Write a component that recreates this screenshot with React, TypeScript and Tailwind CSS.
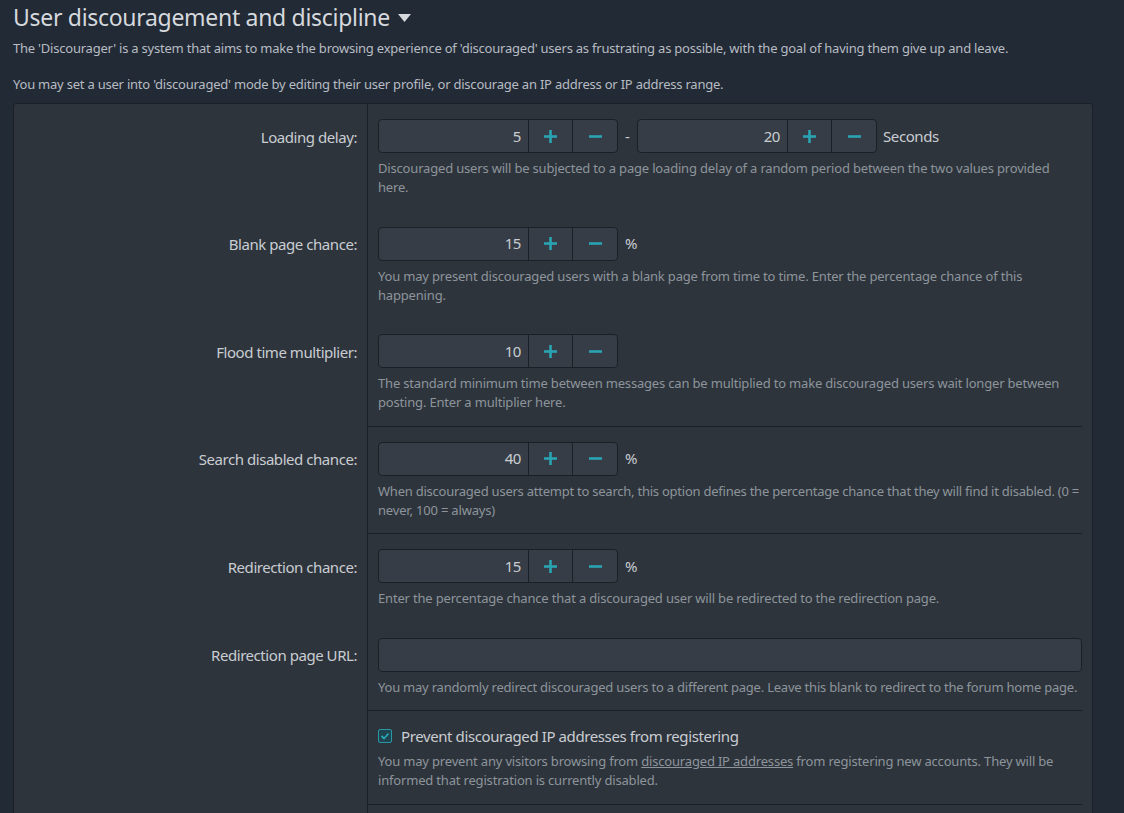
import React from 'react';

const font = { fontFamily: '"Noto Sans", "Open Sans", sans-serif' };

const PlusIcon = () => (
  <svg width="13" height="13" viewBox="0 0 13 13" className="text-[#2aa3b3]">
    <rect x="5.2" y="0" width="2.6" height="13" fill="currentColor" />
    <rect x="0" y="5.2" width="13" height="2.6" fill="currentColor" />
  </svg>
);

const MinusIcon = () => (
  <svg width="13" height="13" viewBox="0 0 13 13" className="text-[#2aa3b3]">
    <rect x="0" y="5.2" width="13" height="2.6" fill="currentColor" />
  </svg>
);

const NumberBox: React.FC<{ value: string }> = ({ value }) => (
  <div className="flex h-[34px] w-[240px] rounded-[4px] border border-[#1b2027] bg-[#363d46]">
    <div className="flex flex-1 items-center justify-end pr-[7px] text-[15px] tracking-[-0.4px] text-[#c9cdd2]">
      {value}
    </div>
    <button className="flex w-[44px] items-center justify-center border-l border-[#1b2027]">
      <PlusIcon />
    </button>
    <button className="flex w-[45px] items-center justify-center border-l border-[#1b2027]">
      <MinusIcon />
    </button>
  </div>
);

const Explain: React.FC<{ children: React.ReactNode }> = ({ children }) => (
  <div className="mt-[6px] text-[13px] leading-[19px] tracking-[-0.18px] text-[#8d949b]">{children}</div>
);

// first row has no top edge; separated rows draw a line across the value column
const Row: React.FC<{ label?: string; separated?: boolean; first?: boolean; children: React.ReactNode }> = ({
  label,
  separated,
  first,
  children,
}) => (
  <div className="grid grid-cols-[354px_1fr]">
    <div className="border-r border-[#1b2027] pr-[10px]">
      {label && (
        <div
          className={`flex h-[34px] items-center justify-end pt-[2px] text-[15px] tracking-[-0.45px] text-[#c9cdd2] ${
            first ? 'mt-[15px]' : 'mt-[16px]'
          }`}
        >
          {label}
        </div>
      )}
    </div>
    <div
      className={`mr-[10px] ${first ? '' : 'border-t'} ${separated ? 'border-[#1b2027]' : 'border-transparent'}`}
    >
      <div className="pl-[10px] pt-[15px] pb-[13.5px]">{children}</div>
    </div>
  </div>
);

export default function App() {
  return (
    <div className="min-h-screen bg-[#222a35] px-[13px] pb-10" style={font}>
      <h2 className="flex items-center gap-[8px] pt-[2px] text-[23px] leading-[30px] tracking-[-0.3px] text-[#d5d9de]">
        User discouragement and discipline
        <svg width="13" height="9" viewBox="0 0 13 9" className="mt-[2px]">
          <path d="M0 0 H13 L6.5 8 Z" fill="#d5d9de" />
        </svg>
      </h2>
      <p className="mt-[7px] text-[13px] leading-[19px] tracking-[-0.22px] text-[#b7bcc3]">
        The 'Discourager' is a system that aims to make the browsing experience of 'discouraged' users as frustrating as
        possible, with the goal of having them give up and leave.
      </p>
      <p className="mt-[17px] text-[13px] leading-[19px] tracking-[-0.22px] text-[#b7bcc3]">
        You may set a user into 'discouraged' mode by editing their user profile, or discourage an IP address or IP
        address range.
      </p>

      <div className="mt-[9px] w-[1080px] rounded-[3px] border border-[#1b2027] bg-[#2e343c]">
        <Row label="Loading delay:" first>
          <div className="flex items-center">
            <NumberBox value="5" />
            <span className="w-[19px] text-center text-[15px] text-[#c9cdd2]">-</span>
            <NumberBox value="20" />
            <span className="ml-[6px] text-[15px] tracking-[-0.4px] text-[#c9cdd2]">Seconds</span>
          </div>
          <Explain>
            Discouraged users will be subjected to a page loading delay of a random period between the two values
            provided
            <br />
            here.
          </Explain>
        </Row>
        <Row label="Blank page chance:">
          <div className="flex items-center">
            <NumberBox value="15" />
            <span className="ml-[7px] text-[15px] text-[#c9cdd2]">%</span>
          </div>
          <Explain>
            You may present discouraged users with a blank page from time to time. Enter the percentage chance of this
            <br />
            happening.
          </Explain>
        </Row>
        <Row label="Flood time multiplier:">
          <div className="flex items-center">
            <NumberBox value="10" />
          </div>
          <Explain>
            The standard minimum time between messages can be multiplied to make discouraged users wait longer between
            <br />
            posting. Enter a multiplier here.
          </Explain>
        </Row>
        <Row label="Search disabled chance:" separated>
          <div className="flex items-center">
            <NumberBox value="40" />
            <span className="ml-[7px] text-[15px] text-[#c9cdd2]">%</span>
          </div>
          <Explain>
            <span className="tracking-[-0.24px]">
              When discouraged users attempt to search, this option defines the percentage chance that they will find it
              disabled. (0 =
            </span>
            <br />
            never, 100 = always)
          </Explain>
        </Row>
        <Row label="Redirection chance:" separated>
          <div className="flex items-center">
            <NumberBox value="15" />
            <span className="ml-[7px] text-[15px] text-[#c9cdd2]">%</span>
          </div>
          <Explain>Enter the percentage chance that a discouraged user will be redirected to the redirection page.</Explain>
        </Row>
        <Row label="Redirection page URL:">
          <div className="h-[34px] w-full rounded-[4px] border border-[#1b2027] bg-[#363d46]" />
          <Explain>
            <span className="whitespace-nowrap tracking-[-0.22px]">
              You may randomly redirect discouraged users to a different page. Leave this blank to redirect to the forum
              home page.
            </span>
          </Explain>
        </Row>
        <Row separated>
          <label className="flex h-[20px] items-center gap-[9px] text-[15px] tracking-[-0.4px] text-[#c9cdd2]">
            <span className="flex h-[14px] w-[14px] items-center justify-center rounded-[2px] border border-[#2a97a6] bg-[#1f4450]">
              <svg width="10" height="10" viewBox="0 0 10 10">
                <path d="M1.5 5 L4 7.5 L8.5 2.5" fill="none" stroke="#2aa3b3" strokeWidth="1.8" />
              </svg>
            </span>
            Prevent discouraged IP addresses from registering
          </label>
          <Explain>
            You may prevent any visitors browsing from <span className="underline">discouraged IP addresses</span> from
            registering new accounts. They will be
            <br />
            informed that registration is currently disabled.
          </Explain>
        </Row>
        <Row separated>
          <div className="h-[40px]" />
        </Row>
      </div>
    </div>
  );
}
